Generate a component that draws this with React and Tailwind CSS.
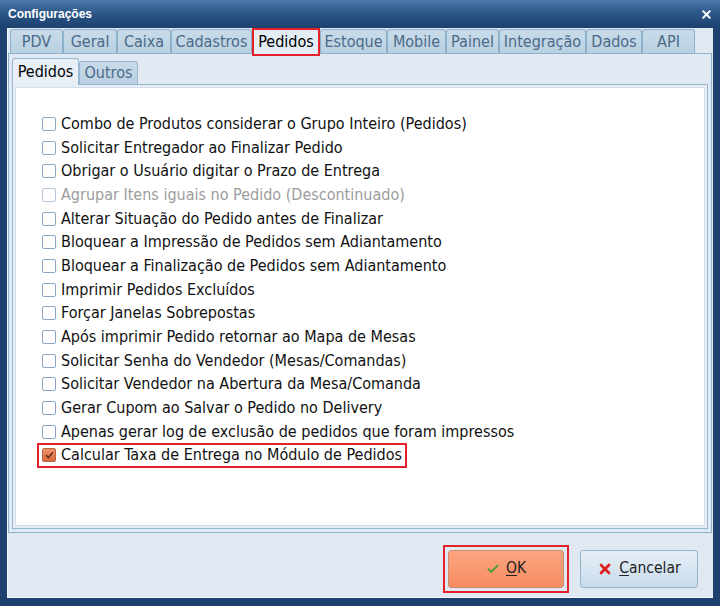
import { Check, X } from 'lucide-react';

// Abas principais da janela de configurações
const TABS = [
  { label: 'PDV', w: 'w-[53px]' },
  { label: 'Geral', w: 'w-[54px]' },
  { label: 'Caixa', w: 'w-[54px]' },
  { label: 'Cadastros', w: 'w-[81px]' },
  { label: 'Pedidos', w: 'w-[68px]', active: true },
  { label: 'Estoque', w: 'w-[67px]' },
  { label: 'Mobile', w: 'w-[59px]' },
  { label: 'Painel', w: 'w-[53px]' },
  { label: 'Integração', w: 'w-[87px]' },
  { label: 'Dados', w: 'w-[56px]' },
  { label: 'API', w: 'w-[53px]' }
];

// Opções da aba Pedidos
const OPCOES = [
  { label: 'Combo de Produtos considerar o Grupo Inteiro (Pedidos)' },
  { label: 'Solicitar Entregador ao Finalizar Pedido' },
  { label: 'Obrigar o Usuário digitar o Prazo de Entrega' },
  { label: 'Agrupar Itens iguais no Pedido (Descontinuado)', disabled: true },
  { label: 'Alterar Situação do Pedido antes de Finalizar' },
  { label: 'Bloquear a Impressão de Pedidos sem Adiantamento' },
  { label: 'Bloquear a Finalização de Pedidos sem Adiantamento' },
  { label: 'Imprimir Pedidos Excluídos' },
  { label: 'Forçar Janelas Sobrepostas' },
  { label: 'Após imprimir Pedido retornar ao Mapa de Mesas' },
  { label: 'Solicitar Senha do Vendedor (Mesas/Comandas)' },
  { label: 'Solicitar Vendedor na Abertura da Mesa/Comanda' },
  { label: 'Gerar Cupom ao Salvar o Pedido no Delivery' },
  { label: 'Apenas gerar log de exclusão de pedidos que foram impressos' },
  { label: 'Calcular Taxa de Entrega no Módulo de Pedidos', checked: true, destaque: true }
];

const FONT = "font-['DejaVu_Sans_Condensed','DejaVu_Sans',sans-serif]";

function Caixa({ checked, disabled }) {
  if (checked) {
    return (
      <span className="w-[14px] h-[14px] rounded-[2px] border border-[#b9643f] bg-gradient-to-b from-[#ee9369] to-[#d9683f] flex items-center justify-center shrink-0">
        <svg width="9" height="8" viewBox="0 0 9 8">
          <path d="M1 4.2 L3.4 6.5 L8 1.2" fill="none" stroke="#6b2f18" strokeWidth="1.6" />
        </svg>
      </span>
    );
  }
  return (
    <span
      className={`w-[14px] h-[14px] rounded-[2px] border bg-white shrink-0 ${
        disabled ? 'border-[#b7c7d8]' : 'border-[#8ba6c4]'
      }`}
    ></span>
  );
}

export default function App() {
  return (
    <div className={`w-[720px] h-[606px] bg-[#1d406e] flex flex-col ${FONT}`}>
      {/* barra de título */}
      <div className="h-[28px] flex items-center justify-between px-[8px] bg-gradient-to-b from-[#4b79a9] via-[#2a5586] to-[#1d416f]">
        <span className="text-white text-[12px] font-bold font-['Liberation_Sans',sans-serif]">Configurações</span>
        <X size={13} strokeWidth={3.5} className="text-white mr-[-1px]" />
      </div>

      {/* área cliente */}
      <div className="flex-1 ml-[7px] mr-[7px] mb-[8px] bg-[#e0e8f1] border-l border-b border-[#f4f7fa] flex flex-col">
        {/* abas principais */}
        <div className="flex items-end pl-[2px] pt-[1px] h-[25px] relative z-10">
          {TABS.map((t) =>
            t.active ? (
              <div
                key={t.label}
                className={`${t.w} h-[28px] -mb-[3px] border-2 border-[#e3212b] bg-[#e4ecf4] flex items-center justify-center text-[16px] text-black`}
              >
                {t.label}
              </div>
            ) : (
              <div
                key={t.label}
                className={`${t.w} h-[24px] border border-b-0 border-[#8db0cb] rounded-t-[3px] bg-gradient-to-b from-[#c9dbe9] to-[#b9d0e2] flex items-center justify-center text-[16px] text-[#4c6a88]`}
              >
                {t.label}
              </div>
            )
          )}
        </div>

        {/* painel da aba */}
        <div className="h-[480px] border border-[#8fb1cd] mr-[1px] bg-[#e1e9f2] px-[3px] pt-[4px] pb-[3px] flex flex-col">
          {/* sub-abas */}
          <div className="flex items-end h-[26px] relative z-10">
            <div className="w-[67px] h-[27px] -mb-[1px] border border-b-0 border-[#97b6d0] rounded-t-[3px] bg-[#e8eff6] flex items-center justify-center text-[16px] text-black">
              Pedidos
            </div>
            <div className="w-[59px] h-[23px] border border-b-0 border-[#97b6d0] rounded-t-[3px] bg-gradient-to-b from-[#c9dbe9] to-[#b9d0e2] flex items-center justify-center text-[16px] text-[#4c6a88]">
              Outros
            </div>
          </div>
          <div className="flex-1 border border-[#97b6d0] bg-[#e6edf5] p-[2px] flex">
            <div className="flex-1 bg-white border border-[#d2dfeb] pl-[26px] pt-[24px]">
              {OPCOES.map((o) => (
                <div key={o.label} className="h-[23.7px] flex items-center">
                  <div
                    className={`flex items-center gap-[5px] ${
                      o.destaque ? '-ml-[5px] h-[25px] border-2 border-[#e3212b] pl-[3px] pr-[3px]' : ''
                    }`}
                  >
                    <Caixa checked={o.checked} disabled={o.disabled} />
                    <span className={`text-[16px] leading-none ${o.disabled ? 'text-[#9c9c9c]' : 'text-[#111]'}`}>
                      {o.label}
                    </span>
                  </div>
                </div>
              ))}
            </div>
          </div>
        </div>

        {/* botões */}
        <div className="flex-1 flex items-start justify-end pt-[12px] pr-[15px] gap-[11px]">
          <div className="border-2 border-[#e3212b] p-[3px]">
            <button className="w-[116px] h-[38px] rounded-[3px] border border-[#c98d73] bg-gradient-to-b from-[#fca47f] to-[#f68c62] flex items-center justify-center gap-[6px] text-[15.5px] text-[#222]">
              <Check size={14} strokeWidth={3} className="text-[#3a9f2a]" />
              <span>
                <span className="underline underline-offset-2">O</span>K
              </span>
            </button>
          </div>
          <button className="mt-[5px] w-[118px] h-[38px] rounded-[3px] border border-[#94b3cd] bg-gradient-to-b from-[#e7eff7] to-[#c7dbec] flex items-center justify-center gap-[6px] text-[15.5px] text-[#222]">
            <X size={16} strokeWidth={4} className="text-[#dd1e1a]" />
            <span>
              <span className="underline underline-offset-2">C</span>ancelar
            </span>
          </button>
        </div>
      </div>
    </div>
  );
}
